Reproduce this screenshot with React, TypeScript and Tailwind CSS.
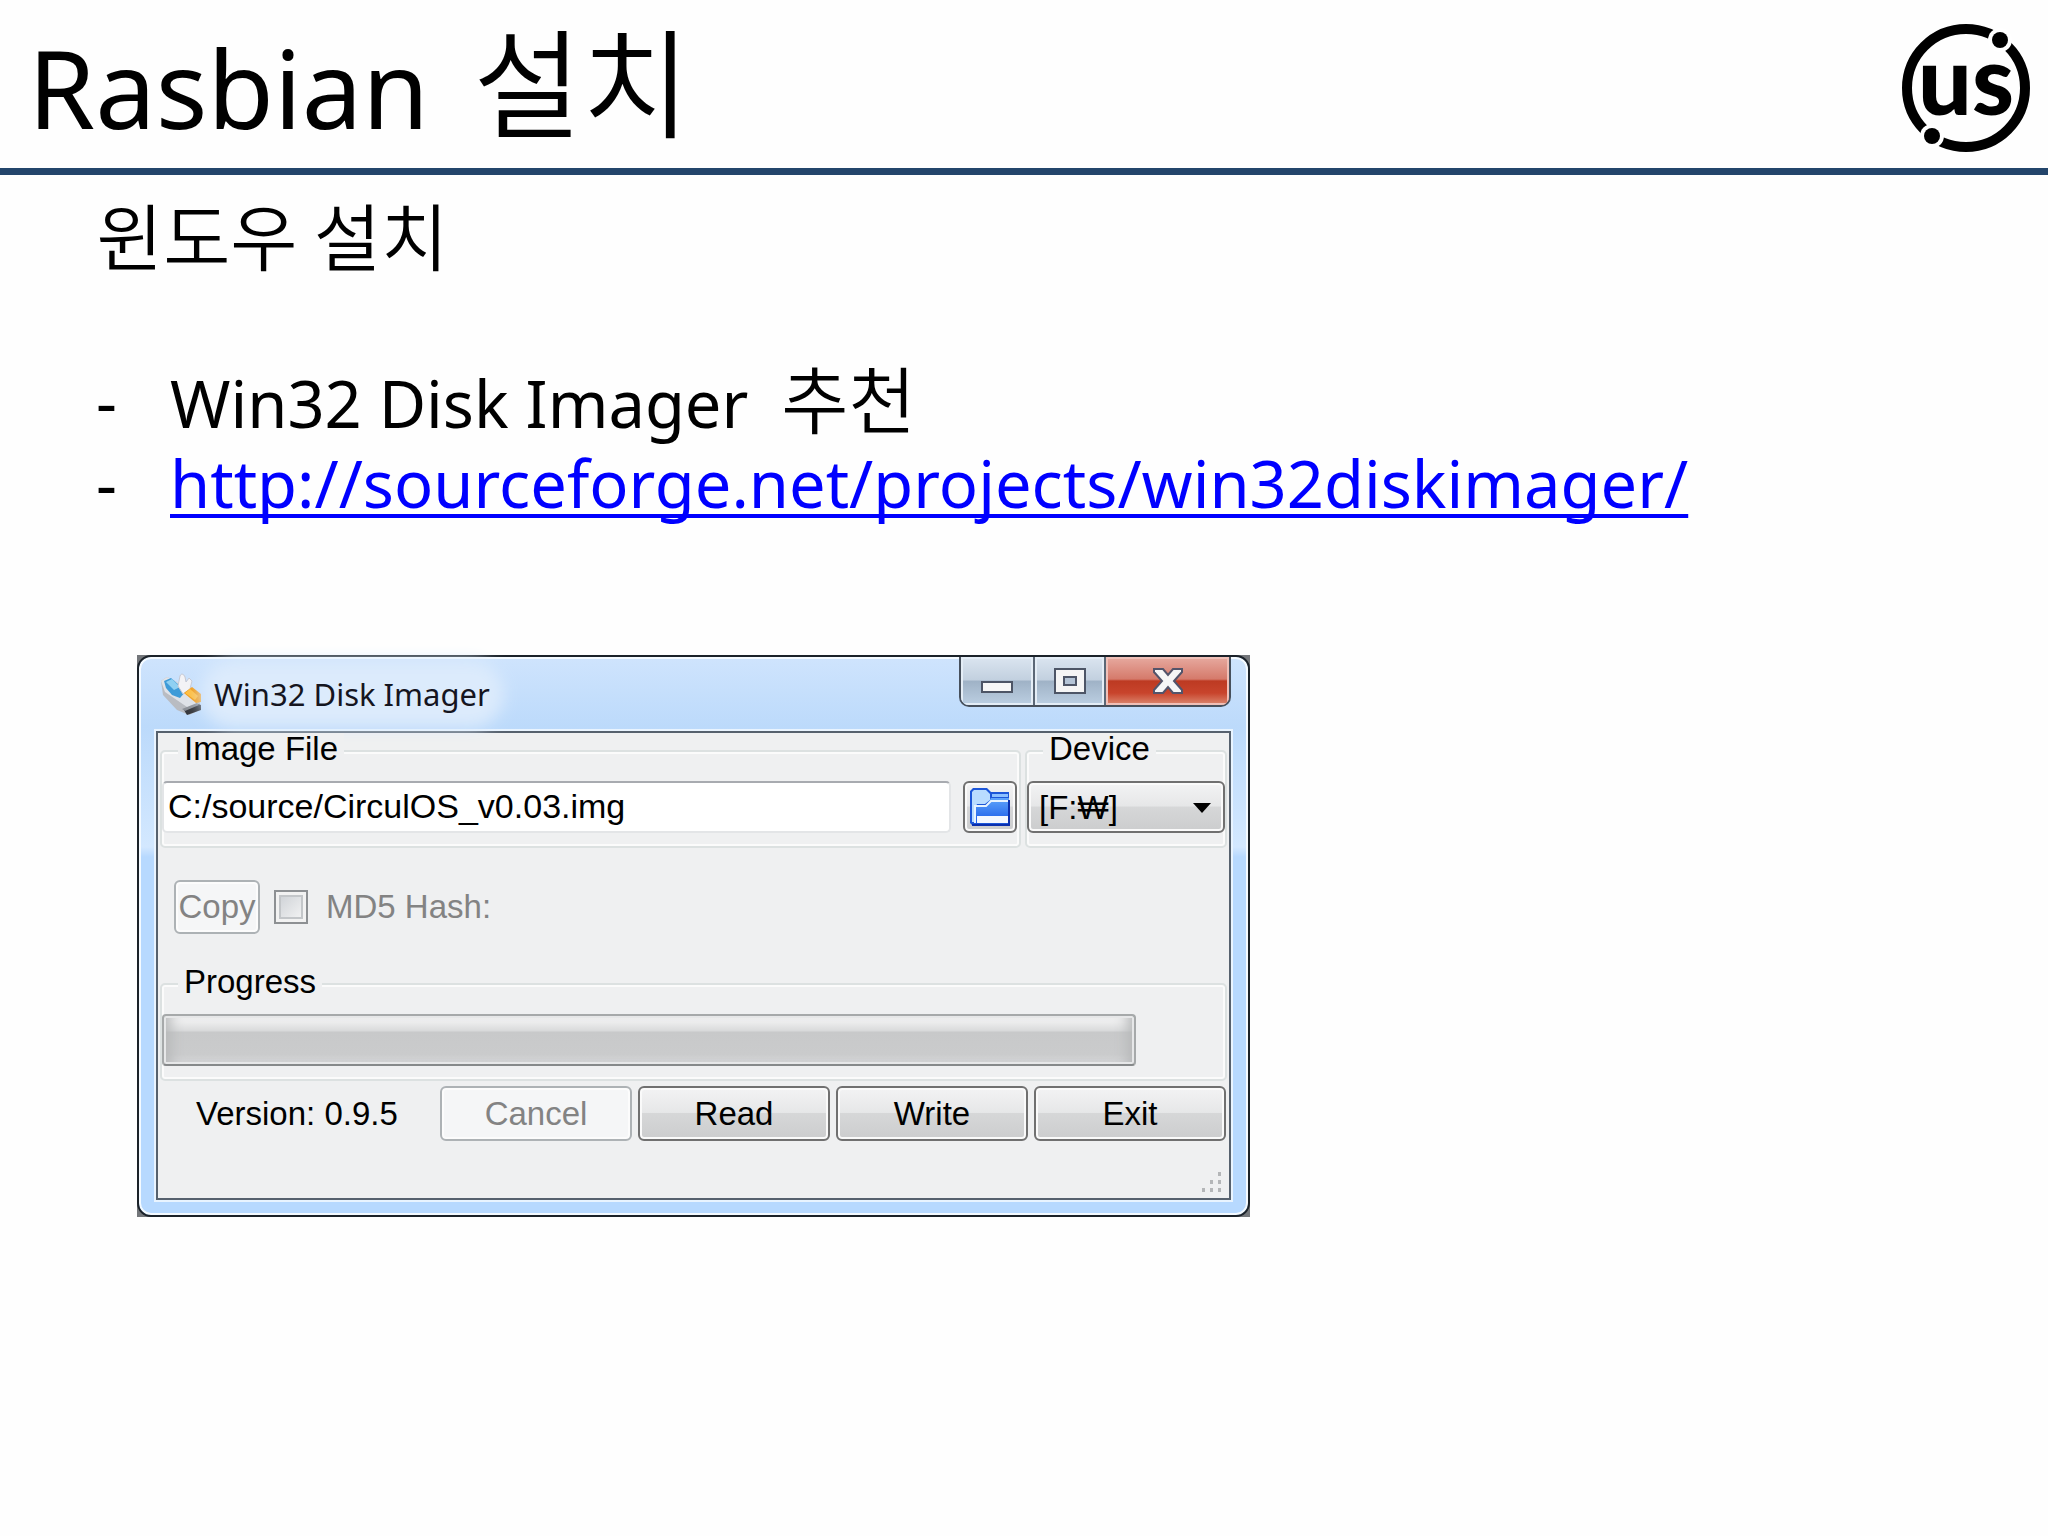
import { useState } from 'react'
import type { ReactNode } from 'react'

const SLIDE_FONT = "font-['Noto_Sans','Noto_Sans_CJK_KR',sans-serif]"
const DIALOG_FONT = "font-['Liberation_Sans','Noto_Sans_CJK_KR',sans-serif]"
const HANGUL_FONT = "font-['Noto_Sans_CJK_KR',sans-serif] font-[350]"

const ACTIONS = [
  { label: 'Cancel', disabled: true },
  { label: 'Read', disabled: false },
  { label: 'Write', disabled: false },
  { label: 'Exit', disabled: false },
]

const ENABLED =
  'border-[#707070] bg-[linear-gradient(#f3f3f4,#e6e7e8_48%,#d6d7d8_50%,#cccdce)] text-black shadow-[inset_0_0_0_2px_#fafafa]'
const DISABLED = 'border-[#adb2b5] bg-[#f5f6f7] text-[#838383] shadow-[inset_0_0_0_2px_#fcfcfc]'

function Logo() {
  return (
    <svg viewBox="0 0 132 132" className="h-[132px] w-[132px]" role="img" aria-label="us">
      <circle cx="66" cy="66" r="59" fill="none" stroke="#000" strokeWidth="10" />
      <circle cx="100" cy="18" r="12" fill="#fff" />
      <circle cx="32" cy="114" r="12" fill="#fff" />
      <circle cx="100" cy="18" r="8" />
      <circle cx="32" cy="114" r="8" />
      <text x="66" y="93" textAnchor="middle" fontSize="95" className="font-['Lato',sans-serif] font-black">us</text>
    </svg>
  )
}

function AppIcon() {
  return (
    <svg viewBox="0 0 42 42" className="h-[42px] w-[42px]" aria-hidden="true">
      <path d="M1 8 7 4l12 6 21 20v7l-11 5-12-5L3 22Z" fill="#b9bcc2" />
      <path d="M1 8 7 4l14 7 18 17-9 8L5 19Z" fill="#dfe2e8" />
      <path d="M4 8 11 5l15 13-6 7-8-3-6-7Z" fill="#3e9bd8" />
      <path d="m6 9 6-3 8 8-6 3Z" fill="#8fd0f2" />
      <path d="M20 3c1-3 4-2 5 1l1 5 3-4 3 3-2 8-7 5-5-8Z" fill="#f3f3f6" stroke="#c6c8d2" />
      <path d="m24 20 8-6 9 7v8l-5 1Z" fill="#f39a12" />
      <path d="m25 20 5-4 8 7-3 4Z" fill="#ffbd3d" />
      <path d="m24 37 14-6 3 1v5l-14 5Z" fill="#34363b" />
      <path d="m22 36 15-6 2 2-14 6Z" fill="#8c9098" />
    </svg>
  )
}

function FolderIcon() {
  return (
    <svg viewBox="0 0 42 42" className="h-[42px] w-[42px]" aria-hidden="true">
      <defs>
        <linearGradient id="folder" x1="0" y1="0" x2="0" y2="1">
          <stop offset="0" stopColor="#5fa5fb" />
          <stop offset="1" stopColor="#1a5be8" />
        </linearGradient>
      </defs>
      <path d="M1 5 4 2h14l4 4h18v33H3l-2-2Z" fill="#1c56d8" />
      <path d="M3 6 5 4h12l4 4v6l-5 4H8l-2 5v13H3Z" fill="#b9dcff" />
      <path d="M23 8h16v3H23Z" fill="#8cc0ff" />
      <path d="M6 37V20h11l5-8h18v25Z" fill="url(#folder)" />
      <path d="M6 37V20h11l5-5h18" fill="none" stroke="#e7f3ff" strokeWidth="2" />
      <path d="M8 30h31v7H8Z" fill="#f4f8ff" />
      <path d="M3 39h37V14" fill="none" stroke="#0a2fae" strokeWidth="2" />
    </svg>
  )
}

function Caption() {
  return (
    <div className="flex h-[50px] overflow-hidden rounded-b-[10px] border-2 border-t-0 border-[#47505c]">
      <button aria-label="Minimize" className="flex w-[74px] items-center justify-center border-r-2 border-[#5b6776] bg-[linear-gradient(#dbe5f0,#c2d0df_48%,#9fb2c6_50%,#bccfe2)] pt-3 shadow-[inset_0_0_0_2px_#e4edf6]">
        <svg viewBox="0 0 32 12" className="h-3 w-8"><path d="M1 1h30v10H1Z" fill="#f7f7f7" stroke="#4d5566" strokeWidth="2" /></svg>
      </button>
      <button aria-label="Maximize" className="flex w-[71px] items-center justify-center border-r-2 border-[#5b6776] bg-[linear-gradient(#dbe5f0,#c2d0df_48%,#9fb2c6_50%,#bccfe2)] shadow-[inset_0_0_0_2px_#e4edf6]">
        <svg viewBox="0 0 32 26" className="h-[26px] w-8">
          <path d="M1 1h30v24H1Z" fill="#f5f5f5" stroke="#4d5566" strokeWidth="2" />
          <path d="M10 9h12v8H10Z" fill="#b4c4d6" stroke="#4d5566" strokeWidth="2" />
        </svg>
      </button>
      <button aria-label="Close" className="flex w-[123px] items-center justify-center bg-[linear-gradient(#e7aaa0,#d57a6b_46%,#bd3a22_50%,#c8442c_75%,#dc8a72)] shadow-[inset_0_0_0_2px_#efc0b8]">
        <svg viewBox="0 0 30 26" className="h-[26px] w-[30px]">
          <path d="M1 1h9l5 6 5-6h9v3l-8 9 8 9v3h-9l-5-6-5 6H1v-3l8-9-8-9Z" fill="#f6f6f6" stroke="#53546a" strokeWidth="2" />
        </svg>
      </button>
    </div>
  )
}

function Group({ title, className = '', children }: { title: string; className?: string; children: ReactNode }) {
  return (
    <fieldset className={`min-w-0 rounded-[5px] border-2 border-[#dce1e1] pt-3 pb-[13px] shadow-[inset_0_0_0_2px_#fbfbfb] ${className}`}>
      <legend className="ml-4 bg-[#eff0f1] px-[6px] pb-1 leading-8">{title}</legend>
      {children}
    </fieldset>
  )
}

function DiskImager() {
  const [file, setFile] = useState('C:/source/CirculOS_v0.03.img')

  return (
    <section aria-label="Win32 Disk Imager" className={`w-[1113px] max-w-full bg-[#73767a] ${DIALOG_FONT} text-[33px]`}>
      <div className="rounded-[14px] border-2 border-[#1b2229] bg-[linear-gradient(#cfe4fd,#bcdafb_70px,#d3e8ff_190px,#b7d9ff_200px)] px-[17px] pb-[15px] shadow-[inset_0_0_0_2px_#f4faff]">
        {/* Title bar */}
        <div className="flex h-[74px] items-start justify-between">
          <div className="flex items-center gap-3 pt-4 pl-1">
            <AppIcon />
            <h2 className="rounded-full bg-[#dcebfc] font-['Noto_Sans',sans-serif] text-[31px] leading-10 text-[#15151f] shadow-[0_0_16px_14px_#dcebfc]">Win32 Disk Imager</h2>
          </div>
          <Caption />
        </div>

        {/* Client area */}
        <div className="border-2 border-[#56616e] bg-[#eff0f1] px-[2px] shadow-[0_0_0_2px_#e9f4ff]">
          <div className="flex gap-1">
            <Group title="Image File" className="flex-1 pr-[2px]">
              <div className="flex items-center gap-3">
                <input
                  aria-label="Image File"
                  value={file}
                  onChange={(e) => setFile(e.target.value)}
                  className="h-[52px] min-w-0 flex-1 rounded-[5px] border-2 border-[#e3e5e7] border-t-[#a8abb0] bg-white px-1 pb-[2px] text-[34px] outline-none"
                />
                <button aria-label="Browse" className={`flex h-[52px] w-[54px] items-center justify-center rounded-[6px] border-2 ${ENABLED}`}>
                  <FolderIcon />
                </button>
              </div>
            </Group>
            <Group title="Device" className="w-[202px]">
              <div className="relative">
                <select aria-label="Device" className={`h-[52px] w-full appearance-none rounded-[6px] border-2 px-[10px] pb-1 ${ENABLED}`}>
                  <option>[F:₩]</option>
                </select>
                <svg viewBox="0 0 18 10" className="pointer-events-none absolute top-[22px] right-[14px] h-[10px] w-[18px]" aria-hidden="true"><path d="M0 0h18L9 10Z" /></svg>
              </div>
            </Group>
          </div>

          <div className="flex items-center py-8 pl-[14px] text-[#838383]">
            <button disabled className={`h-[54px] w-[86px] overflow-hidden rounded-[6px] border-2 ${DISABLED}`}>
              Copy
            </button>
            <input id="md5" type="checkbox" disabled className="ml-[14px] h-[34px] w-[34px] appearance-none border-2 border-[#8d9093] bg-[linear-gradient(135deg,#c9cdd2,#f8f8f8)] shadow-[inset_0_0_0_3px_#f2f2f2,inset_0_0_0_5px_#c3c6c9]" />
            <label htmlFor="md5" className="ml-[18px]">MD5 Hash:</label>
          </div>

          <Group title="Progress">
            <div
              role="progressbar"
              aria-label="Progress"
              aria-valuenow={0}
              className="h-[52px] w-[974px] max-w-full rounded-[4px] border-2 border-[#a6a9aa] border-b-[#86898a] bg-[linear-gradient(#fafafa,#dadbdc_30%,#c8c9ca_34%,#cacbcc_80%,#d8d9da)] shadow-[inset_0_0_0_2px_#e6e7e8,inset_14px_0_14px_-8px_#b4b6b7,inset_-14px_0_14px_-8px_#b4b6b7]"
            />
          </Group>

          <div className="mt-[5px] flex items-center justify-between pr-px">
            <span className="pl-9">Version: 0.9.5</span>
            <div className="flex gap-[6px]">
              {ACTIONS.map((a) => (
                <button key={a.label} disabled={a.disabled} className={`h-[55px] w-48 rounded-[6px] border-2 ${a.disabled ? DISABLED : ENABLED}`}>
                  {a.label}
                </button>
              ))}
            </div>
          </div>

          {/* Resize grip */}
          <div className="flex h-[57px] items-end justify-end pr-1 pb-1">
            <svg viewBox="0 0 22 22" className="h-[22px] w-[22px]" fill="#b4b6b8" aria-hidden="true">
              <path d="M17 0h3v4h-3ZM9 8h3v4H9ZM17 8h3v4h-3ZM1 16h3v4H1ZM9 16h3v4H9ZM17 16h3v4h-3Z" />
            </svg>
          </div>
        </div>
      </div>
    </section>
  )
}

export default function App() {
  return (
    <div className={`min-h-screen bg-[#fefefe] ${SLIDE_FONT} text-black`}>
      <header className="flex h-[175px] items-center justify-between border-b-[7px] border-[#23456b] pt-2 pr-4 pl-7">
        <h1 className="text-[108px] leading-[160px]">
          Rasbian <span className={`ml-4 text-[118px] leading-none ${HANGUL_FONT}`}>설치</span>
        </h1>
        <Logo />
      </header>

      <main className="px-24 pt-[17px] text-[65px] leading-[82px]">
        <h2 className={`text-[73px] ${HANGUL_FONT}`}>윈도우 설치</h2>
        <ul className="mt-[86px]">
          <li className="flex h-[82px]">
            <span className="w-[74px]">-</span>
            <span>
              Win32 Disk Imager <span className={`ml-4 text-[73px] leading-none ${HANGUL_FONT}`}>추천</span>
            </span>
          </li>
          <li className="flex h-[82px]">
            <span className="w-[74px]">-</span>
            <a href="http://sourceforge.net/projects/win32diskimager/" className="text-[#0000ff] underline decoration-4 underline-offset-[6px] [text-decoration-skip-ink:none]">
              http://sourceforge.net/projects/win32diskimager/
            </a>
          </li>
        </ul>
      </main>

      <div className="pt-[131px] pl-[137px]">
        <DiskImager />
      </div>
    </div>
  )
}
